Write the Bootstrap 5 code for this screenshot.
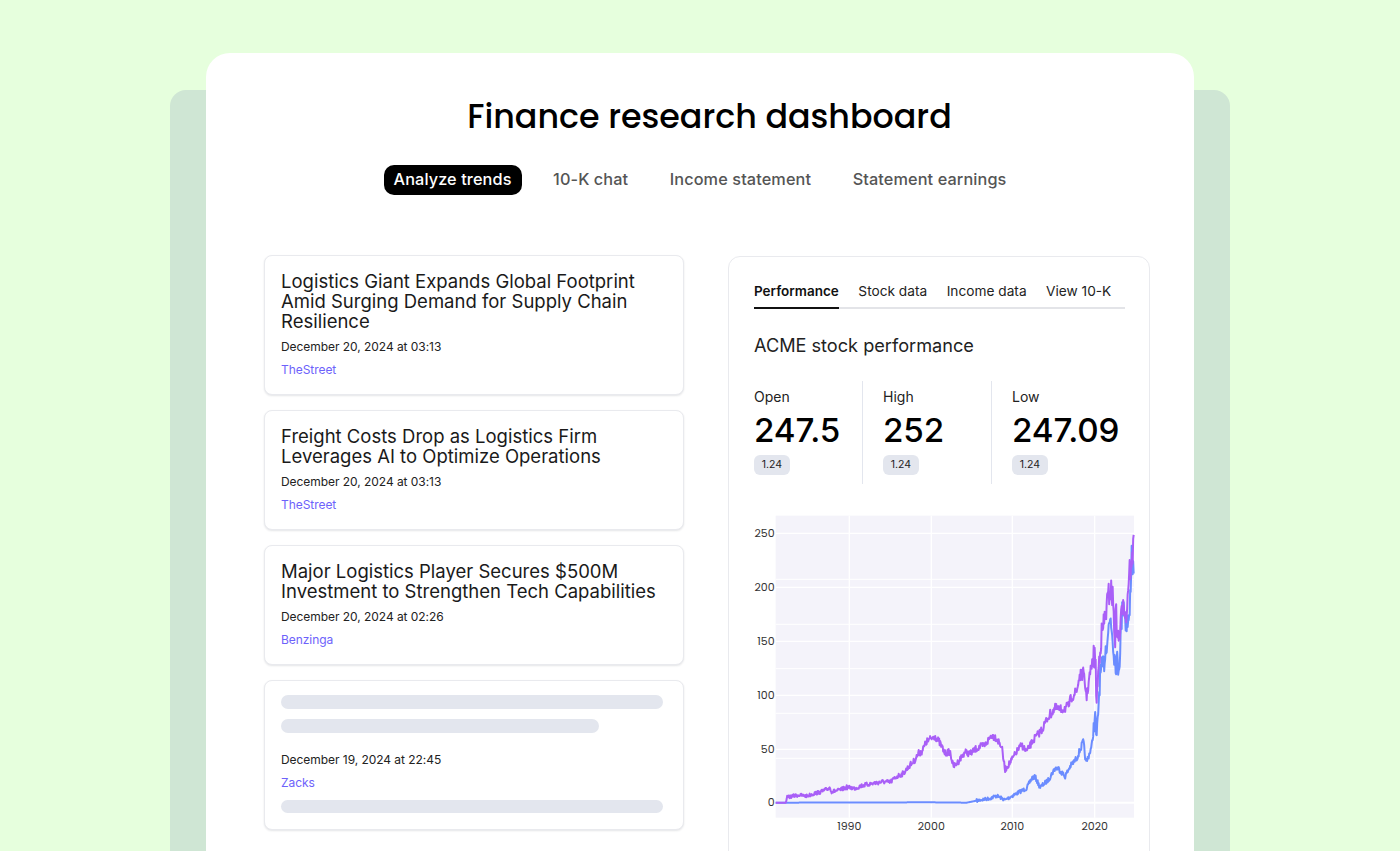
<!DOCTYPE html>
<html lang="en">
<head>
<meta charset="utf-8">
<title>Finance research dashboard</title>
<link href="https://cdn.jsdelivr.net/npm/bootstrap@5.3.0/dist/css/bootstrap.min.css" rel="stylesheet">
<style>
html,body{height:851px;overflow:hidden}
body{background:#e6ffdd;font-family:Inter,"Liberation Sans",sans-serif;color:#000}
.back-panel{display:flow-root;width:1060px;height:900px;margin:90px auto 0;padding:0 36px;background:#cfe6d4;border-radius:16px 16px 0 0}
.front-panel{height:900px;margin-top:-37px;padding:0 44px 0 58px;background:#fff;border-radius:24px 24px 0 0;position:relative}
.page-title{font:500 33.3px/44px Poppins,Lato,Inter,sans-serif;padding-top:42px;margin:0 0 0 5px;text-align:center}
.page-tabs{margin:26px 0 0 -14px;gap:21.5px;justify-content:center}
.page-tab{font-size:16.3px;font-weight:500;line-height:29px;height:30px;padding:0 10px;border-radius:10px;color:#555;letter-spacing:.1px;white-space:nowrap}
.page-tab.on{background:#000;color:#fff}
.columns{gap:44px;margin-top:60px}
.left-col{width:420px;gap:15px;flex:none}
.news{border:1px solid #e9eaee;border-radius:8px;box-shadow:0 1px 2px rgba(30,40,60,.12);padding:15px 20px 15px 16px;background:#fff}
.news-title{font-size:18.5px;font-weight:400;line-height:20px;margin:0;color:#1a1a1a}
.news-date{font-size:12px;line-height:18px;margin-top:7px;color:#222;letter-spacing:-.05px}
.news-source{font-size:12px;line-height:18px;margin-top:5px;color:#6d62fb;letter-spacing:-.05px}
.news.loading{padding-top:14px;padding-bottom:16px}
.skel{height:13.5px;border-radius:7px;background:#e3e6ee}
.skel.short{width:83.3%;margin-top:10.5px}
.skel.end{margin-top:8px}
.news-date.skel-date{margin-top:18px}
.right-col{width:422px;flex:none;margin-top:1px;height:800px;border:1px solid #e9eaee;border-radius:12px;padding:24px 25px}
.sub-tabs{width:371px;gap:19.5px;border-bottom:2px solid #e3e4e8;height:28px}
.sub-tab{font-size:13.7px;line-height:20px;color:#222;height:28px;white-space:nowrap}
.sub-tab.on{font-size:13.5px;font-weight:600;color:#111;border-bottom:2px solid #111}
.panel-title{font-size:18.15px;line-height:24px;font-weight:400;margin:24px 0 0;color:#222}
.stats{margin-top:24px;height:103px}
.stat{width:109px;margin-right:20px;padding-top:6px;border-right:1px solid #e3e6ee;flex:none}
.stat:last-child{border-right:0;margin-right:0}
.stat-label{font-size:14px;line-height:20px;color:#222}
.stat-num{font-size:33.2px;font-weight:500;line-height:40px;margin-top:3px;letter-spacing:-.1px}
.stat-chip{display:inline-block;width:36px;height:20px;margin-top:4px;font-size:10.5px;line-height:20px;text-align:center;border-radius:6px;background:#e3e6ee;color:#222}
.chart{display:block;width:410px;height:351px;margin:16px 0 0 -14px}
.chart text{font-family:Poppins,Lato,Inter,sans-serif;font-size:33px;fill:#333}
</style>
</head>
<body>
<div class="back-panel">
  <div class="front-panel">
    <h1 class="page-title">Finance research dashboard</h1>
    <div class="page-tabs d-flex">
      <div class="page-tab on">Analyze trends</div>
      <div class="page-tab">10-K chat</div>
      <div class="page-tab">Income statement</div>
      <div class="page-tab">Statement earnings</div>
    </div>
    <div class="columns d-flex align-items-start">
      <div class="left-col d-flex flex-column">
        <div class="news">
          <h2 class="news-title">Logistics Giant Expands Global Footprint Amid Surging Demand for Supply Chain Resilience</h2>
          <div class="news-date">December 20, 2024 at 03:13</div>
          <div class="news-source">TheStreet</div>
        </div>
        <div class="news">
          <h2 class="news-title">Freight Costs Drop as Logistics Firm Leverages AI to Optimize Operations</h2>
          <div class="news-date">December 20, 2024 at 03:13</div>
          <div class="news-source">TheStreet</div>
        </div>
        <div class="news">
          <h2 class="news-title">Major Logistics Player Secures $500M Investment to Strengthen Tech Capabilities</h2>
          <div class="news-date">December 20, 2024 at 02:26</div>
          <div class="news-source">Benzinga</div>
        </div>
        <div class="news loading">
          <div class="skel"></div>
          <div class="skel short"></div>
          <div class="news-date skel-date">December 19, 2024 at 22:45</div>
          <div class="news-source">Zacks</div>
          <div class="skel end"></div>
        </div>
      </div>
      <div class="right-col">
        <div class="sub-tabs d-flex">
          <div class="sub-tab on">Performance</div>
          <div class="sub-tab">Stock data</div>
          <div class="sub-tab">Income data</div>
          <div class="sub-tab">View 10-K</div>
        </div>
        <h3 class="panel-title">ACME stock performance</h3>
        <div class="stats d-flex">
          <div class="stat"><div class="stat-label">Open</div><div class="stat-num">247.5</div><span class="stat-chip">1.24</span></div>
          <div class="stat"><div class="stat-label">High</div><div class="stat-num">252</div><span class="stat-chip">1.24</span></div>
          <div class="stat"><div class="stat-label">Low</div><div class="stat-num">247.09</div><span class="stat-chip">1.24</span></div>
        </div>
        <svg class="chart" viewBox="0 0 1230 1053" xmlns="http://www.w3.org/2000/svg" role="img" aria-label="Stock price chart">
          <rect x="107" y="47" width="1075" height="906" fill="#f4f3fa"/>
          <g stroke="#fff" stroke-width="3" fill="none">
            <path d="M107 238H1182M107 373H1182M107 506H1182M107 640H1182M107 775H1182"/>
          </g>
          <g stroke="#fff" stroke-width="4" fill="none">
            <path d="M107 100H1182M107 262H1182M107 424H1182M107 586H1182M107 748H1182M328 47V953M574 47V953M817 47V953M1064 47V953"/>
            <path d="M107 908H1182" stroke-width="6"/>
          </g>
          <path id="blue" fill="none" stroke="#6b8cff" stroke-width="6" stroke-linejoin="round" d="M107 908L1182 250"/>
          <path id="purple" fill="none" stroke="#a95ff7" stroke-width="6" stroke-linejoin="round" d="M107 908L1182 100"/>
          <g text-anchor="end">
            <text x="104" y="111">250</text><text x="104" y="273">200</text><text x="104" y="435">150</text><text x="104" y="597">100</text><text x="104" y="759">50</text><text x="104" y="919">0</text>
          </g>
          <g text-anchor="middle">
            <text x="328" y="990">1990</text><text x="574" y="990">2000</text><text x="817" y="990">2010</text><text x="1064" y="990">2020</text>
          </g>
        </svg>
      </div>
    </div>
  </div>
</div>
<script>
(function(){
  var seed=7;function rnd(){seed=(seed*16807)%2147483647;return seed/2147483647-.5;}
  function draw(id,pts,amp,step){
    var d=[],i=0;
    for(var x=107;x<=1182;x+=step){
      while(i<pts.length-2&&pts[i+1][0]<x)i++;
      var a=pts[i],b=pts[i+1],t=(x-a[0])/(b[0]-a[0]);
      var y=a[1]+(b[1]-a[1])*t;
      var h=908-y;
      var k=x>1060?2.6:1;
      if(h>=6)y+=rnd()*Math.min(9+h*amp*k,80);
      d.push((d.length?'L':'M')+x+' '+Math.min(y,908).toFixed(1));
    }
    document.getElementById(id).setAttribute('d',d.join(''));
  }
  draw('blue',[[107,908],[570,907],[680,908],[720,900],[750,895],[770,887],[795,900],[830,880],[860,865],[875,835],[885,830],[900,862],[925,840],[945,805],[955,805],[975,830],[990,800],[1010,775],[1030,725],[1038,790],[1055,740],[1065,650],[1070,720],[1080,530],[1090,500],[1100,420],[1112,350],[1125,480],[1137,497],[1150,280],[1155,360],[1168,370],[1175,150],[1182,250]],.07,1.5);
  draw('purple',[[107,908],[138,908],[140,893],[150,890],[175,885],[200,888],[225,880],[245,875],[270,863],[275,875],[300,870],[320,862],[345,865],[365,857],[400,850],[430,845],[450,847],[470,830],[490,820],[510,795],[525,780],[535,760],[545,755],[560,725],[585,708],[600,730],[615,760],[630,755],[640,800],[655,785],[675,755],[690,762],[710,745],[735,735],[755,705],[770,715],[785,740],[795,810],[815,780],[830,755],[845,735],[860,755],[880,720],[905,690],[925,650],[945,625],[960,630],[985,620],[995,590],[1010,575],[1018,530],[1030,520],[1040,590],[1050,520],[1065,460],[1070,600],[1080,435],[1095,350],[1110,265],[1118,290],[1125,420],[1128,335],[1135,430],[1145,350],[1150,280],[1158,360],[1168,205],[1175,210],[1182,100]],.07,1.5);
})();
</script>
<script src="https://cdn.jsdelivr.net/npm/bootstrap@5.3.0/dist/js/bootstrap.bundle.min.js"></script>
</body>
</html>
